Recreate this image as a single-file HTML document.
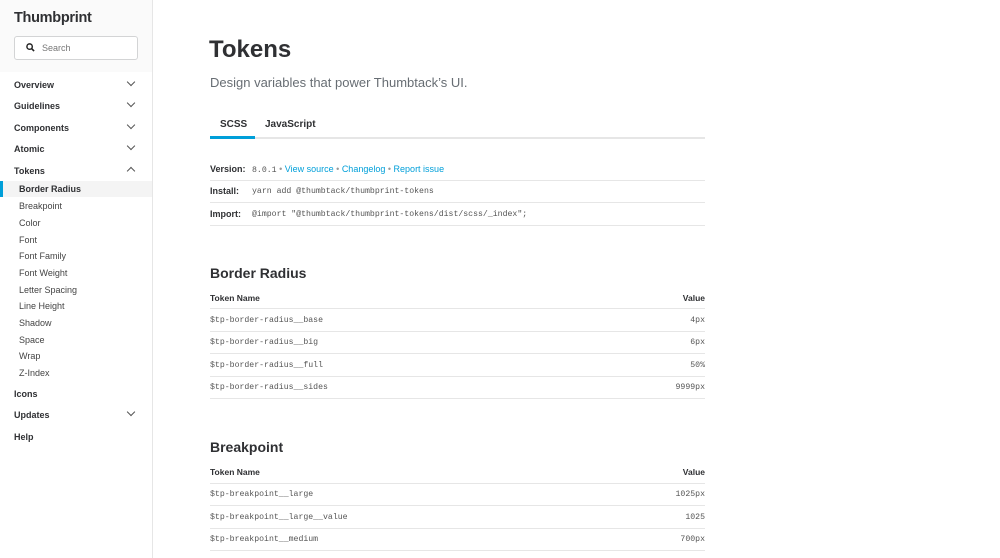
<!DOCTYPE html><html><head><style>
body{margin:0;width:1000px;height:558px;overflow:hidden;font-family:"Liberation Sans",sans-serif;color:#2f3033;background:#fff;position:relative}
.sb{position:absolute;left:0;top:0;width:152px;height:558px;background:#fafafa;border-right:1px solid #e6e6e6}
.logo{position:absolute;left:14px;top:10px;font-size:14.5px;font-weight:bold;letter-spacing:-0.3px;color:#2f3033}
.search{position:absolute;left:14px;top:36px;width:122px;height:22px;border:1px solid #d3d4d5;border-radius:3px;background:#fff;font-size:9px;color:#777}
.search span{position:absolute;left:27px;top:6px}
.ni{position:absolute;left:14px;font-size:9px;font-weight:bold}
.ch{position:absolute;left:128px;width:5px;height:5px;border-right:1.2px solid #555;border-bottom:1.2px solid #555;transform:rotate(45deg)}
.up{transform:rotate(-135deg)}
.si{position:absolute;left:19px;font-size:9px;color:#444}
.sel{position:absolute;left:0;top:181px;width:152px;height:16px;background:#fff}
.bar{position:absolute;left:0;top:181px;width:3px;height:16px;background:#009fd9}
.a{position:absolute;font-size:9px}
.mono{font-family:"Liberation Mono",monospace;font-size:8.2px;color:#555}
.line{position:absolute;left:210px;width:495px;height:1px;background:#e6e6e6}
a{color:#009fd9;text-decoration:none}
</style></head><body>
<div class="sb">
<div class="logo">Thumbprint</div>
<div class="search"><svg style="position:absolute;left:11px;top:6px" width="9" height="9" viewBox="0 0 10 10"><circle cx="4" cy="4" r="3" fill="none" stroke="#222" stroke-width="1.6"/><path d="M6.2 6.2L9 9" stroke="#222" stroke-width="1.8"/></svg><span>Search</span></div>
<div style="position:absolute;left:0;top:72px;width:152px;height:486px;background:#fff"></div>
<div class="ni" style="top:80px">Overview</div><div class="ch" style="top:79px"></div>
<div class="ni" style="top:101px">Guidelines</div><div class="ch" style="top:100px"></div>
<div class="ni" style="top:123px">Components</div><div class="ch" style="top:122px"></div>
<div class="ni" style="top:144px">Atomic</div><div class="ch" style="top:143px"></div>
<div class="ni" style="top:166px">Tokens</div><div class="ch up" style="top:168px"></div>
<div class="sel" style="background:#f4f4f4"></div><div class="bar"></div>
<div class="si" style="top:184px;font-weight:bold;color:#2f3033">Border Radius</div>
<div class="si" style="top:201px">Breakpoint</div>
<div class="si" style="top:218px">Color</div>
<div class="si" style="top:235px">Font</div>
<div class="si" style="top:251px">Font Family</div>
<div class="si" style="top:268px">Font Weight</div>
<div class="si" style="top:285px">Letter Spacing</div>
<div class="si" style="top:301px">Line Height</div>
<div class="si" style="top:318px">Shadow</div>
<div class="si" style="top:335px">Space</div>
<div class="si" style="top:351px">Wrap</div>
<div class="si" style="top:368px">Z-Index</div>
<div class="ni" style="top:389px">Icons</div>
<div class="ni" style="top:410px">Updates</div><div class="ch" style="top:409px"></div>
<div class="ni" style="top:432px">Help</div>
</div>
<div class="a" style="left:209px;top:36px;font-size:24px;font-weight:bold">Tokens</div>
<div class="a" style="left:210px;top:75px;font-size:13px;color:#676d73">Design variables that power Thumbtack’s UI.</div>
<div class="a" style="left:220px;top:119px;font-size:10px;font-weight:bold">SCSS</div>
<div class="a" style="left:265px;top:119px;font-size:10px;font-weight:bold">JavaScript</div>
<div class="line" style="top:137px;height:2px"></div>
<div style="position:absolute;left:210px;top:136px;width:45px;height:3px;background:#009fd9"></div>
<div class="a" style="left:210px;top:164px;font-weight:bold">Version:</div>
<div class="a" style="left:252px;top:164px"><span class="mono">8.0.1</span> <span style="color:#999">•</span> <a>View source</a> <span style="color:#999">•</span> <a>Changelog</a> <span style="color:#999">•</span> <a>Report issue</a></div>
<div class="line" style="top:180px"></div>
<div class="a" style="left:210px;top:186px;font-weight:bold">Install:</div>
<div class="a mono" style="left:252px;top:187px">yarn add @thumbtack/thumbprint-tokens</div>
<div class="line" style="top:202px"></div>
<div class="a" style="left:210px;top:209px;font-weight:bold">Import:</div>
<div class="a mono" style="left:252px;top:210px">@import "@thumbtack/thumbprint-tokens/dist/scss/_index";</div>
<div class="line" style="top:225px"></div>

<div class="a" style="left:210px;top:265px;font-size:14px;font-weight:bold">Border Radius</div>
<div class="a" style="left:210px;top:293px;font-size:8.5px;font-weight:bold">Token Name</div>
<div class="a" style="right:295px;top:293px;font-size:8.5px;font-weight:bold">Value</div>
<div class="line" style="top:308px"></div>
<div class="a mono" style="left:210px;top:316px">$tp-border-radius__base</div><div class="a mono" style="right:295px;top:316px">4px</div>
<div class="line" style="top:331px"></div>
<div class="a mono" style="left:210px;top:338px">$tp-border-radius__big</div><div class="a mono" style="right:295px;top:338px">6px</div>
<div class="line" style="top:353px"></div>
<div class="a mono" style="left:210px;top:361px">$tp-border-radius__full</div><div class="a mono" style="right:295px;top:361px">50%</div>
<div class="line" style="top:376px"></div>
<div class="a mono" style="left:210px;top:383px">$tp-border-radius__sides</div><div class="a mono" style="right:295px;top:383px">9999px</div>
<div class="line" style="top:398px"></div>

<div class="a" style="left:210px;top:439px;font-size:14px;font-weight:bold">Breakpoint</div>
<div class="a" style="left:210px;top:467px;font-size:8.5px;font-weight:bold">Token Name</div>
<div class="a" style="right:295px;top:467px;font-size:8.5px;font-weight:bold">Value</div>
<div class="line" style="top:483px"></div>
<div class="a mono" style="left:210px;top:490px">$tp-breakpoint__large</div><div class="a mono" style="right:295px;top:490px">1025px</div>
<div class="line" style="top:505px"></div>
<div class="a mono" style="left:210px;top:513px">$tp-breakpoint__large__value</div><div class="a mono" style="right:295px;top:513px">1025</div>
<div class="line" style="top:528px"></div>
<div class="a mono" style="left:210px;top:535px">$tp-breakpoint__medium</div><div class="a mono" style="right:295px;top:535px">700px</div>
<div class="line" style="top:550px"></div>
</body></html>
